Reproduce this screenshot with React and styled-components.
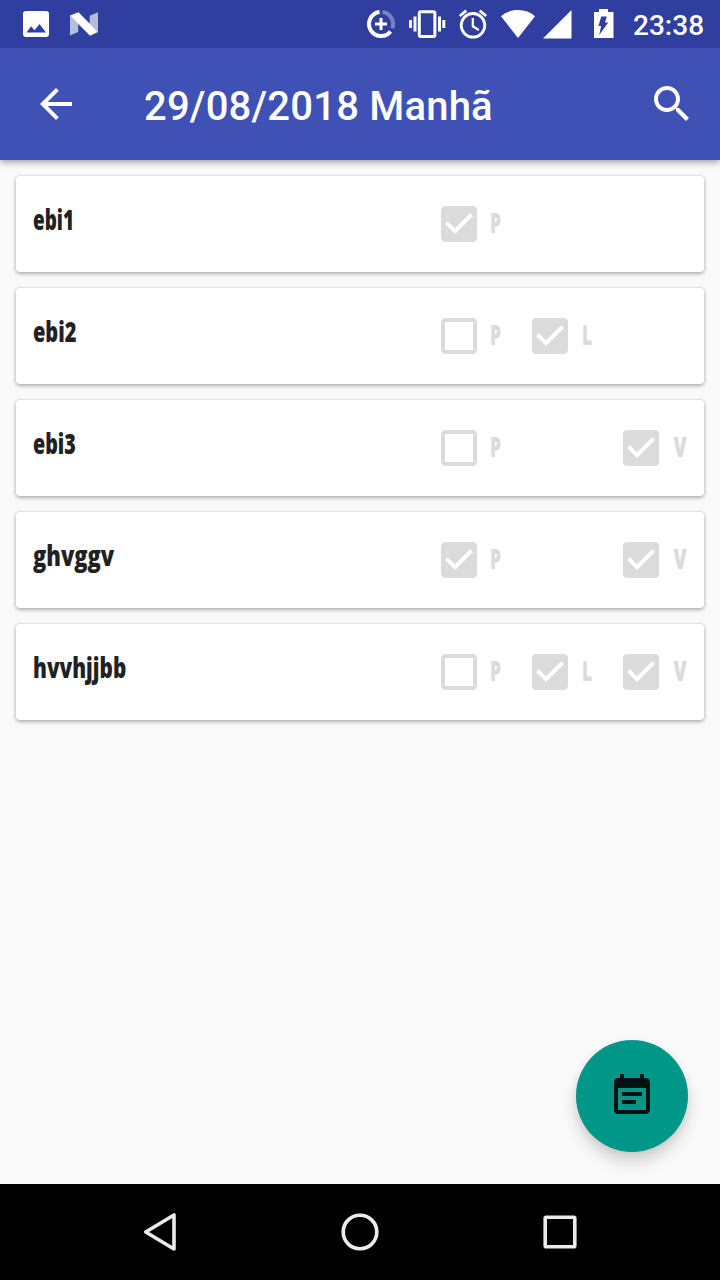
import React from "react";
import styled, { createGlobalStyle } from "styled-components";

const GlobalStyle = createGlobalStyle`
  * { box-sizing: border-box; }
  body { margin: 0; background: #fafafa; }
`;

const Screen = styled.div`
  position: relative;
  display: flex;
  flex-direction: column;
  width: 720px;
  height: 1280px;
  overflow: hidden;
  background: #fafafa;
  font-family: Roboto, sans-serif;
`;

const StatusBar = styled.header`
  display: flex;
  align-items: center;
  justify-content: space-between;
  flex: none;
  height: 48px;
  padding: 0 16px 0 22px;
  background: #303f9f;
  color: #fff;
  z-index: 2;
`;

const StatusGroup = styled.div`
  display: flex;
  align-items: center;
  gap: ${({ $gap }) => $gap || 0}px;
`;

const Clock = styled.span`
  width: 71px;
  margin-left: 19px;
  padding-top: 3px;
  font-size: 28px;
  line-height: 45px;
  font-weight: 500;
  white-space: nowrap;
`;

const Glyph = styled.svg`
  display: block;
  flex: none;
  width: ${({ $w }) => $w || 48}px;
  height: ${({ $h }) => $h || 48}px;
  fill: currentColor;
`;

const AppBar = styled.div`
  display: flex;
  align-items: center;
  flex: none;
  height: 112px;
  padding: 0 24px 0 32px;
  background: #3f51b5;
  color: #fff;
  box-shadow: 0 2px 7px rgba(0, 0, 0, 0.4);
  z-index: 1;
`;

const Title = styled.h1`
  flex: 1;
  margin: 0;
  padding: 5px 0 0 64px;
  font-size: 40px;
  line-height: 47px;
  font-weight: 500;
  letter-spacing: 0.2px;
  white-space: nowrap;
`;

const List = styled.main`
  display: flex;
  flex: 1;
  flex-direction: column;
  gap: 16px;
  padding: 16px;
`;

const Card = styled.article`
  display: flex;
  align-items: center;
  height: 96px;
  padding-left: 17px;
  border-radius: 4px;
  background: #fff;
  box-shadow: 0 2px 4px rgba(0, 0, 0, 0.28), 0 0 2px rgba(0, 0, 0, 0.2);
`;

const Name = styled.span`
  flex: none;
  width: 402px;
  height: 48px;
  font-family: "Open Sans", sans-serif;
  font-size: 29px;
  line-height: 38px;
  font-weight: 800;
  color: #212121;
  white-space: nowrap;
  transform: scaleX(${({ $squeeze }) => $squeeze});
  transform-origin: left center;
`;

const Options = styled.div`
  display: grid;
  grid-template-columns: repeat(3, 91px);
  align-items: center;
  color: #dbdbdb;
`;

const Option = styled.label`
  display: flex;
  align-items: center;
  grid-column: ${({ $column }) => $column};
  height: 48px;
`;

const OptionLabel = styled.span`
  width: 20px;
  padding-left: ${({ $inset }) => $inset}px;
  font-family: "Open Sans", sans-serif;
  font-size: 29px;
  line-height: 44px;
  padding-bottom: 4px;
  font-weight: 800;
  transform: scaleX(${({ $squeeze }) => $squeeze});
  transform-origin: ${({ $inset }) => $inset}px center;
`;

const Fab = styled.button`
  position: absolute;
  right: 32px;
  bottom: 128px;
  display: grid;
  place-items: center;
  width: 112px;
  height: 112px;
  padding: 0;
  border: 0;
  border-radius: 50%;
  background: #009688;
  color: #00120f;
  box-shadow: 0 10px 16px rgba(0, 0, 0, 0.16), 0 2px 7px rgba(0, 0, 0, 0.07);
`;

const NavBar = styled.nav`
  display: flex;
  align-items: center;
  justify-content: center;
  flex: none;
  gap: 152px;
  height: 96px;
  background: #000;
`;

const NavIcon = styled(Glyph)`
  fill: none;
  stroke: #ebebeb;
  stroke-width: 3.6;
  stroke-linejoin: round;
`;

const entries = [
  { name: "ebi1", squeeze: 0.65, marks: { P: true } },
  { name: "ebi2", squeeze: 0.69, marks: { P: false, L: true } },
  { name: "ebi3", squeeze: 0.68, marks: { P: false, V: true } },
  { name: "ghvggv", squeeze: 0.755, marks: { P: true, V: true } },
  { name: "hvvhjjbb", squeeze: 0.715, marks: { P: false, L: true, V: true } },
];

const options = {
  P: { column: 1, squeeze: 0.6, inset: 7 },
  L: { column: 2, squeeze: 0.6, inset: 8 },
  V: { column: 3, squeeze: 0.65, inset: 8.5 },
};

const CheckIcon = ({ checked }) => (
  <Glyph viewBox="0 0 24 24">
    {checked ? (
      <path d="M19 3H5c-1.11 0-2 .9-2 2v14c0 1.1.89 2 2 2h14c1.11 0 2-.9 2-2V5c0-1.1-.89-2-2-2zm-9 14l-5-5 1.41-1.41L10 14.17l7.59-7.59L19 8l-9 9z" />
    ) : (
      <path d="M19 5v14H5V5h14m0-2H5c-1.1 0-2 .9-2 2v14c0 1.1.9 2 2 2h14c1.1 0 2-.9 2-2V5c0-1.1-.9-2-2-2z" />
    )}
  </Glyph>
);

const StatusIcons = () => (
  <StatusGroup>
    <Glyph $w={44} viewBox="365 0 44 48">
      <g fill="none" stroke="#fff">
        <path d="M382.5 12.1A12 12 0 0 1 392.3 28.2" strokeWidth="4" opacity=".35" />
        <path d="M379.5 12.1A12 12 0 1 0 390.5 31.4" strokeWidth="4" />
        <path d="M381 18v12M375 24h12" strokeWidth="3" />
      </g>
    </Glyph>
    <Glyph $w={49} viewBox="409 0 49 48">
      <rect x="419.3" y="11.8" width="15.6" height="24.6" rx="1.5" fill="none" stroke="#fff" strokeWidth="3" />
      <path d="M409 20h3v8h-3zM413.5 16.5h3v15h-3zM438 16.5h3v15h-3zM442.3 20h3v8h-3z" />
    </Glyph>
    <Glyph $w={43} viewBox="458 0 43 48">
      <g fill="none" stroke="#fff" strokeWidth="2.8">
        <circle cx="473" cy="25.3" r="11.8" />
        <path d="M472.8 18v8.3l6 3.7" strokeWidth="2.2" />
        <path d="M459.8 16l6.5-5.4M479.7 10.6l6.5 5.4" />
      </g>
    </Glyph>
    <Glyph $w={42} viewBox="501 0 42 48">
      <path d="M518 38L501 16.2C505.6 12.2 511.5 10 518 10s12.4 2.2 17 6.2z" />
    </Glyph>
    <Glyph $w={51} viewBox="543 0 51 48">
      <path d="M543 38.5L571.5 10V38.5z" />
    </Glyph>
    <Glyph $w={20} viewBox="594 0 20 48">
      <path
        fillRule="evenodd"
        d="M594 12h5V9h9v3h5.5v26H594zM601.2 16.5h5.6l-1.8 6h3.2L599.2 35l2-9h-2.7z"
      />
    </Glyph>
    <Clock>23:38</Clock>
  </StatusGroup>
);

export default function App() {
  return (
    <Screen>
      <GlobalStyle />
      <StatusBar>
        <StatusGroup $gap={19}>
          <Glyph $w={28} viewBox="22 0 28 48">
            <path
              fillRule="evenodd"
              d="M26 11h20a3 3 0 0 1 3 3v20a3 3 0 0 1-3 3H26a3 3 0 0 1-3-3V14a3 3 0 0 1 3-3zM26.5 32.5H46L39.5 24l-5 6.3-3.5-4z"
            />
          </Glyph>
          <Glyph $w={30} viewBox="69 0 30 48">
            <path d="M70 15.5l8.2 8V32L70 35.6zM89.7 15.8l8.3-3.5V32l-8.3-8z" opacity=".65" />
            <path d="M70 15.5l8.5-3.3L98 32l-8 3.7z" />
          </Glyph>
        </StatusGroup>
        <StatusIcons />
      </StatusBar>
      <AppBar>
        <Glyph viewBox="0 0 24 24">
          <path d="M20 11H7.83l5.59-5.59L12 4l-8 8 8 8 1.41-1.41L7.83 13H20v-2z" />
        </Glyph>
        <Title>29/08/2018 Manhã</Title>
        <Glyph viewBox="0 0 24 24">
          <path d="M15.5 14h-.79l-.28-.27C15.41 12.59 16 11.11 16 9.5 16 5.91 13.09 3 9.5 3S3 5.91 3 9.5 5.91 16 9.5 16c1.61 0 3.09-.59 4.23-1.57l.27.28v.79l5 4.99L20.49 19l-4.99-5zm-6 0C7.01 14 5 11.99 5 9.5S7.01 5 9.5 5 14 7.01 14 9.5 11.99 14 9.5 14z" />
        </Glyph>
      </AppBar>
      <List>
        {entries.map(({ name, squeeze, marks }) => (
          <Card key={name}>
            <Name $squeeze={squeeze}>{name}</Name>
            <Options>
              {Object.entries(marks).map(([mark, checked]) => (
                <Option key={mark} $column={options[mark].column}>
                  <CheckIcon checked={checked} />
                  <OptionLabel $squeeze={options[mark].squeeze} $inset={options[mark].inset}>
                    {mark}
                  </OptionLabel>
                </Option>
              ))}
            </Options>
          </Card>
        ))}
      </List>
      <Fab aria-label="Agenda">
        <Glyph viewBox="0 0 24 24">
          <path d="M17 10H7v2h10v-2zm2-7h-1V1h-2v2H8V1H6v2H5c-1.11 0-1.99.9-1.99 2L3 19c0 1.1.89 2 2 2h14c1.1 0 2-.9 2-2V5c0-1.1-.9-2-2-2zm0 16H5V8h14v11zm-5-5H7v2h7v-2z" />
        </Glyph>
      </Fab>
      <NavBar>
        <NavIcon viewBox="0 0 48 48">
          <path d="M9.7 24L38 7v34z" />
        </NavIcon>
        <NavIcon viewBox="0 0 48 48">
          <circle cx="24" cy="24" r="16.8" />
        </NavIcon>
        <NavIcon viewBox="0 0 48 48">
          <rect x="9.2" y="9.2" width="29.6" height="29.6" rx="1" />
        </NavIcon>
      </NavBar>
    </Screen>
  );
}
